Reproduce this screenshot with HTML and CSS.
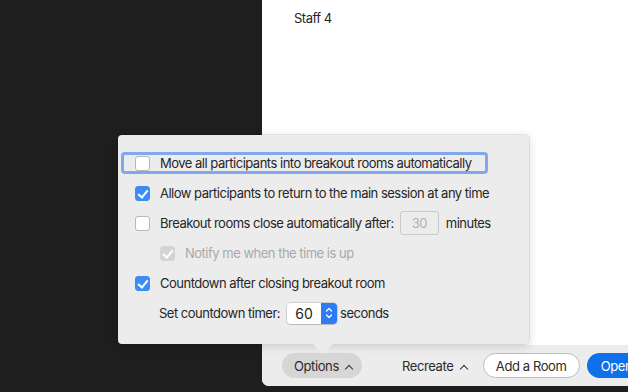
FILE: index.html
```html
<!DOCTYPE html>
<html lang="en">
<head>
    <meta charset="UTF-8">
    <meta name="viewport" content="width=device-width, initial-scale=1.0">
    <title>Breakout Rooms</title>
    <link rel="stylesheet" href="styles.css">
</head>
<body>

<div class="app">
    <div class="sidebar"></div>
    <div class="main">
        <div class="room-list">
            <div class="room-item">Staff 4</div>
        </div>
        <div class="footer">
            <button class="btn btn-options">Options <span class="caret"></span></button>
            <button class="btn btn-plain">Recreate <span class="caret"></span></button>
            <button class="btn btn-outline">Add a Room</button>
            <button class="btn btn-primary">Open</button>
        </div>
    </div>
</div>

<div class="popover">
    <label class="row focused">
        <span class="check"></span>
        Move all participants into breakout rooms automatically
    </label>
    <label class="row">
        <span class="check checked"></span>
        Allow participants to return to the main session at any time
    </label>
    <label class="row">
        <span class="check"></span>
        Breakout rooms close automatically after:
        <span class="num-box">30</span>
        minutes
    </label>
    <label class="row sub disabled">
        <span class="check checked"></span>
        Notify me when the time is up
    </label>
    <label class="row">
        <span class="check checked"></span>
        Countdown after closing breakout room
    </label>
    <div class="row plain">
        Set countdown timer:
        <span class="stepper">
            <span class="stepper-value">60</span>
            <span class="stepper-arrows">
                <svg width="8" height="14" viewBox="0 0 8 14">
                    <path d="M1.5 5 L4 2.5 L6.5 5 M1.5 9 L4 11.5 L6.5 9" fill="none" stroke="#fff" stroke-width="1.3" stroke-linecap="round" stroke-linejoin="round"/>
                </svg>
            </span>
        </span>
        seconds
    </div>
    <div class="arrow"></div>
</div>

</body>
</html>
```

FILE: styles.css
```css
body {
    margin: 0;
    width: 628px;
    height: 392px;
    overflow: hidden;
    background: #1e1e1e;
    font-family: Inter, "Noto Sans", sans-serif;
    font-size: 13px;
    letter-spacing: -0.5px;
    color: #262626;
}

.app {
    display: flex;
    height: 386px;
}

.sidebar {
    width: 262px;
}

.main {
    flex: 1;
    display: flex;
    flex-direction: column;
    background: #fff;
    border-bottom-left-radius: 7px;
    overflow: hidden;
}

.room-list {
    flex: 1;
    padding: 10px 0 0 32px;
}

.footer {
    height: 41px;
    display: flex;
    align-items: center;
    padding-left: 20px;
    background: #ececec;
    white-space: nowrap;
}

.btn {
    font-family: inherit;
    font-size: 13px;
    letter-spacing: -0.4px;
    color: #2b2b2b;
    height: 25px;
    border: none;
    border-radius: 13px;
    padding: 0 12px;
    background: none;
    flex-shrink: 0;
}

.btn-options {
    width: 80px;
    background: #d6d6d6;
    margin-right: 28px;
}

.btn-plain {
    margin-right: 4px;
}

.btn-outline {
    width: 97px;
    background: #fff;
    border: 1px solid #bdbdbd;
    margin-right: 7px;
}

.btn-primary {
    width: 60px;
    text-align: left;
    padding-left: 14px;
    background: #0e71eb;
    color: #fff;
}

.caret {
    display: inline-block;
    width: 5px;
    height: 5px;
    border-left: 1.5px solid #333;
    border-top: 1.5px solid #333;
    transform: rotate(45deg);
    margin-left: 4px;
    position: relative;
    top: 1px;
}

.popover {
    position: absolute;
    left: 118px;
    top: 135px;
    width: 411px;
    height: 209px;
    box-sizing: border-box;
    padding: 13px 0 0 0;
    background: #ececec;
    border-radius: 4px;
    box-shadow: 0 0 0 1px rgba(0, 0, 0, 0.08), 0 2px 10px rgba(0, 0, 0, 0.15);
}

.arrow {
    position: absolute;
    left: 195px;
    bottom: -10px;
    width: 0;
    height: 0;
    border-left: 10px solid transparent;
    border-right: 10px solid transparent;
    border-top: 10px solid #ececec;
}

.row {
    display: flex;
    align-items: center;
    height: 30px;
    padding-left: 17px;
    white-space: nowrap;
}

.row.focused {
    display: inline-flex;
    margin: 4px 0 4px 3px;
    padding: 0 14px 0 11px;
    border: 3px solid #81a8ec;
    border-radius: 4px;
    box-sizing: content-box;
    height: 16px;
}

.row.sub {
    padding-left: 42px;
}

.row.plain {
    padding-left: 41px;
}

.row.disabled {
    color: #a9a9a9;
}

.check {
    width: 13px;
    height: 13px;
    border: 1px solid #b7b7b7;
    border-radius: 3px;
    background: #fff;
    margin-right: 10px;
    flex-shrink: 0;
    position: relative;
}

.check.checked {
    background: #3b8df3;
    border-color: #3b8df3;
}

.check.checked::after {
    content: "";
    position: absolute;
    left: 4px;
    top: 1px;
    width: 4px;
    height: 8px;
    border-right: 2px solid #fff;
    border-bottom: 2px solid #fff;
    transform: rotate(40deg);
}

.disabled .check.checked {
    background: #d4d4d4;
    border-color: #d4d4d4;
}

.num-box {
    width: 37px;
    height: 22px;
    margin: 0 7px 0 6px;
    border: 1px solid #c9c9c9;
    border-radius: 3px;
    background: #ececec;
    color: #b0b0b0;
    display: flex;
    align-items: center;
    justify-content: center;
}

.stepper {
    display: flex;
    height: 21px;
    margin: 0 3px 0 7px;
    border-radius: 4px;
    overflow: hidden;
    box-shadow: 0 0 0 1px rgba(0, 0, 0, 0.12), 0 1px 1px rgba(0, 0, 0, 0.1);
}

.stepper-value {
    width: 34px;
    background: #fff;
    font-size: 14px;
    letter-spacing: 0;
    display: flex;
    align-items: center;
    justify-content: center;
}

.stepper-arrows {
    width: 16px;
    background: #2f7bf5;
    display: flex;
    align-items: center;
    justify-content: center;
}
```
